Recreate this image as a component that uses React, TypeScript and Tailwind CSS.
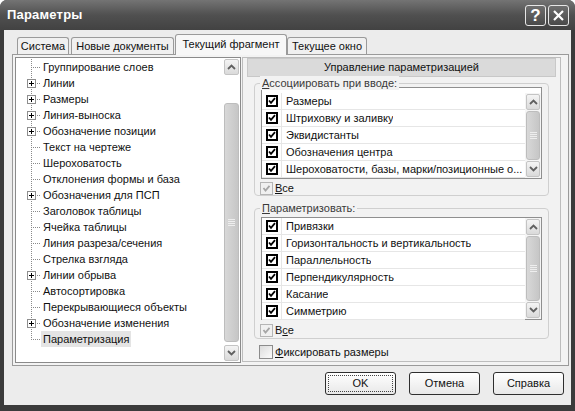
import React from 'react'

const FONT = { fontFamily: '"Liberation Sans", Arial, sans-serif' }

type TreeItem = { label: string; plus?: boolean }

const treeItems: TreeItem[] = [
  { label: 'Группирование слоев' },
  { label: 'Линии', plus: true },
  { label: 'Размеры', plus: true },
  { label: 'Линия-выноска', plus: true },
  { label: 'Обозначение позиции', plus: true },
  { label: 'Текст на чертеже' },
  { label: 'Шероховатость' },
  { label: 'Отклонения формы и база' },
  { label: 'Обозначения для ПСП', plus: true },
  { label: 'Заголовок таблицы' },
  { label: 'Ячейка таблицы' },
  { label: 'Линия разреза/сечения' },
  { label: 'Стрелка взгляда' },
  { label: 'Линии обрыва', plus: true },
  { label: 'Автосортировка' },
  { label: 'Перекрывающиеся объекты' },
  { label: 'Обозначение изменения', plus: true },
  { label: 'Параметризация' },
]

const assocItems = [
  'Размеры',
  'Штриховку и заливку',
  'Эквидистанты',
  'Обозначения центра',
  'Шероховатости, базы, марки/позиционные о...',
]

const paramItems = [
  'Привязки',
  'Горизонтальность и вертикальность',
  'Параллельность',
  'Перпендикулярность',
  'Касание',
  'Симметрию',
]

// ── small drawings ────────────────────────────────────────────────────────
function TreeConnector({ plus, last }: { plus?: boolean; last?: boolean }) {
  return (
    <svg width="25" height="16" className="shrink-0">
      <line x1="15.5" y1="0" x2="15.5" y2={last ? 8 : 16} stroke="#8a8a8a" strokeDasharray="1 1" />
      <line x1="15" y1="8.5" x2="25" y2="8.5" stroke="#8a8a8a" strokeDasharray="1 1" />
      {plus && (
        <g>
          <rect x="11.5" y="4.5" width="8" height="8" fill="#fff" stroke="#8e8e8e" />
          <line x1="13" y1="8.5" x2="18" y2="8.5" stroke="#000" />
          <line x1="15.5" y1="6" x2="15.5" y2="11" stroke="#000" />
        </g>
      )}
    </svg>
  )
}

function Chevron({ up }: { up?: boolean }) {
  return (
    <svg width="9" height="6" viewBox="0 0 9 6">
      <path
        d={up ? 'M1 5 L4.5 1.5 L8 5' : 'M1 1 L4.5 4.5 L8 1'}
        fill="none"
        stroke="#606060"
        strokeWidth="1.8"
      />
    </svg>
  )
}

function ScrollButton({ up }: { up?: boolean }) {
  return (
    <div className="h-[16px] w-full shrink-0 rounded-[2px] border border-[#c4c4c4] bg-gradient-to-b from-[#f4f4f4] to-[#dadada] flex items-center justify-center">
      <Chevron up={up} />
    </div>
  )
}

function Thumb({ className }: { className: string }) {
  return (
    <div className={`w-full rounded-[3px] border border-[#bdbdbd] bg-gradient-to-r from-[#d8d8d8] via-[#cfcfcf] to-[#c6c6c6] flex items-center justify-center ${className}`}>
      <div className="flex flex-col gap-[1px]">
        <div className="w-[7px] h-[1px] bg-[#eeeeee]" />
        <div className="w-[7px] h-[1px] bg-[#eeeeee]" />
        <div className="w-[7px] h-[1px] bg-[#eeeeee]" />
        <div className="w-[7px] h-[1px] bg-[#eeeeee]" />
      </div>
    </div>
  )
}

function BlackCheck() {
  return (
    <div className="w-[12px] h-[12px] border-2 border-black bg-white flex items-center justify-center">
      <svg width="8" height="8" viewBox="0 0 8 8">
        <path d="M1 3.5 L3 5.8 L7 1.2" fill="none" stroke="#000" strokeWidth="1.8" />
      </svg>
    </div>
  )
}

function GrayCheck() {
  return (
    <div className="w-[13px] h-[13px] border border-[#b5b5b5] bg-[#f0f0f0] flex items-center justify-center">
      <svg width="9" height="9" viewBox="0 0 9 9">
        <path d="M1.5 4 L3.5 6.5 L7.5 1.8" fill="none" stroke="#a6a6a6" strokeWidth="1.8" />
      </svg>
    </div>
  )
}

function EmptyCheck() {
  return <div className="w-[14px] h-[14px] border border-[#8c8c8c] bg-gradient-to-br from-[#dcdcdc] to-[#fbfbfb]" />
}

function CheckList({ items, className }: { items: string[]; className: string }) {
  return (
    <div className={`mx-[6px] border border-[#8f8f8f] bg-white flex ${className}`}>
      <div className="flex-1 flex flex-col">
        {items.map(text => (
          <div key={text} className="h-[17px] flex border-b border-[#e6e6e6]">
            <div className="w-[20px] shrink-0 flex items-center justify-center border-r border-[#e6e6e6]">
              <BlackCheck />
            </div>
            <div className="pl-[4px] text-[11px] leading-[16px] text-[#111] whitespace-nowrap overflow-hidden">
              {text}
            </div>
          </div>
        ))}
      </div>
      <div className="w-[16px] shrink-0 flex flex-col p-[1px] bg-[#f5f5f5]">
        <ScrollButton up />
        <Thumb className="flex-1 my-[1px]" />
        <ScrollButton />
      </div>
    </div>
  )
}

function GroupBox({ label, accel, children, className }: { label: string; accel: string; children: React.ReactNode; className: string }) {
  return (
    <div className={`relative mx-[11px] border border-[#cfcfcf] rounded-[4px] ${className}`}>
      <div className="absolute -top-[8px] left-[5px] px-[2px] bg-[#f2f2f2] text-[11px] leading-[14px] text-[#3a3a3a]">
        <span className="underline">{accel}</span>
        {label}
      </div>
      {children}
    </div>
  )
}

function XpButton({ children, focused }: { children: React.ReactNode; focused?: boolean }) {
  return (
    <div className="w-[71px] h-[23px] rounded-[3px] border border-[#2e2e2e] bg-gradient-to-b from-[#ffffff] to-[#e8e8e8] flex items-center justify-center p-[2px]">
      <div className={`w-full h-full flex items-center justify-center text-[11px] text-[#111] ${focused ? 'border border-dotted border-[#444]' : ''}`}>
        {children}
      </div>
    </div>
  )
}

function Tab({ children, active, className }: { children: React.ReactNode; active?: boolean; className: string }) {
  return (
    <div
      className={`border border-b-0 border-[#9a9a9a] rounded-t-[3px] text-center text-[11px] text-[#111] ${
        active ? 'h-[21px] -mb-[1px] bg-[#f7f7f7] leading-[18px]' : 'h-[17px] bg-[#f0f0f0] leading-[17px]'
      } ${className}`}
    >
      {children}
    </div>
  )
}

export default function App() {
  return (
    <div style={FONT} className="w-[575px] h-[411px] bg-[#3b3b3b] flex flex-col overflow-hidden rounded-t-[7px]">
      {/* Title bar */}
      <div className="h-[30px] shrink-0 bg-gradient-to-b from-[#747474] via-[#505050] to-[#424242] flex items-center pl-[7px] pr-[6px]">
        <div className="flex-1 text-white font-bold text-[13px] tracking-[0.2px]">Параметры</div>
        <div className="flex gap-[2px]">
          <div className="w-[21px] h-[21px] rounded-[3px] border border-[#e6e6e6] bg-gradient-to-b from-[#6e6e6e] to-[#4a4a4a] flex items-center justify-center text-white font-bold text-[17px] leading-none">
            ?
          </div>
          <div className="w-[21px] h-[21px] rounded-[3px] border border-[#e6e6e6] bg-gradient-to-b from-[#6e6e6e] to-[#4a4a4a] flex items-center justify-center">
            <svg width="13" height="13" viewBox="0 0 13 13">
              <path d="M2 2 L11 11 M11 2 L2 11" stroke="#fff" strokeWidth="2.2" />
            </svg>
          </div>
        </div>
      </div>

      {/* Body */}
      <div className="flex-1 mx-[4px] mb-[6px] bg-[#ececec] flex flex-col">
        {/* Tabs */}
        <div className="flex items-end pl-[13px] pt-[3px] h-[24px] relative z-10">
          <Tab className="w-[52px]">Система</Tab>
          <Tab className="w-[103px] ml-[2px]">Новые документы</Tab>
          <Tab active className="w-[112px] ml-[1px]">Текущий фрагмент</Tab>
          <Tab className="w-[80px]">Текущее окно</Tab>
        </div>

        {/* Tab page */}
        <div className="ml-[8px] mr-[2px] h-[312px] border border-[#9a9a9a] bg-[#f3f3f3] flex pt-[2px] pl-[2px] gap-[1px]">
          {/* Tree */}
          <div className="w-[226px] h-[306px] border border-[#8a8a8a] bg-white flex">
            <div className="flex-1 flex flex-col pt-[1px]">
              {treeItems.map((item, i) => (
                <div key={item.label} className="h-[16px] flex items-center">
                  <TreeConnector plus={item.plus} last={i === treeItems.length - 1} />
                  <div className={`px-[2px] text-[11px] leading-[16px] text-[#111] whitespace-nowrap ${i === treeItems.length - 1 ? 'bg-[#e4e4e4]' : ''}`}>
                    {item.label}
                  </div>
                </div>
              ))}
            </div>
            <div className="w-[16px] shrink-0 flex flex-col py-[1px] pr-[1px]">
              <ScrollButton up />
              <div className="flex-1 flex flex-col pt-[28px] pb-[3px]">
                <Thumb className="flex-1" />
              </div>
              <ScrollButton />
            </div>
          </div>

          {/* Right panel */}
          <div className="w-[319px] h-[305px] border border-[#bdbdbd] bg-[#f2f2f2] flex flex-col">
            <div className="mx-[4px] h-[19px] border border-[#c8c8c8] bg-[#dadada] text-center text-[11px] leading-[17px] text-[#111]">
              Управление параметризацией
            </div>

            <GroupBox label="ссоциировать при вводе:" accel="А" className="mt-[6px] h-[113px] pt-[3px]">
              <CheckList items={assocItems} className="h-[92px] pt-[5px]" />
              <div className="flex items-center gap-[2px] mt-[2px] ml-[5px]">
                <GrayCheck />
                <span className="text-[11px] leading-[14px] text-[#111]"><span className="underline">В</span>се</span>
              </div>
            </GroupBox>

            <GroupBox label="араметризовать:" accel="П" className="mt-[12px] h-[131px] pt-[8px]">
              <CheckList items={paramItems} className="h-[103px]" />
              <div className="flex items-center gap-[2px] mt-[3px] ml-[5px]">
                <GrayCheck />
                <span className="text-[11px] leading-[14px] text-[#111]">В<span className="underline">с</span>е</span>
              </div>
            </GroupBox>

            <div className="flex items-center gap-[2px] mt-[6px] ml-[16px]">
              <EmptyCheck />
              <span className="text-[11px] leading-[14px] text-[#111]"><span className="underline">Ф</span>иксировать размеры</span>
            </div>
          </div>
        </div>

        {/* Buttons */}
        <div className="flex justify-end gap-[13px] pr-[7px] mt-[6px]">
          <XpButton focused>OK</XpButton>
          <XpButton>Отмена</XpButton>
          <XpButton>Справка</XpButton>
        </div>
      </div>
    </div>
  )
}
